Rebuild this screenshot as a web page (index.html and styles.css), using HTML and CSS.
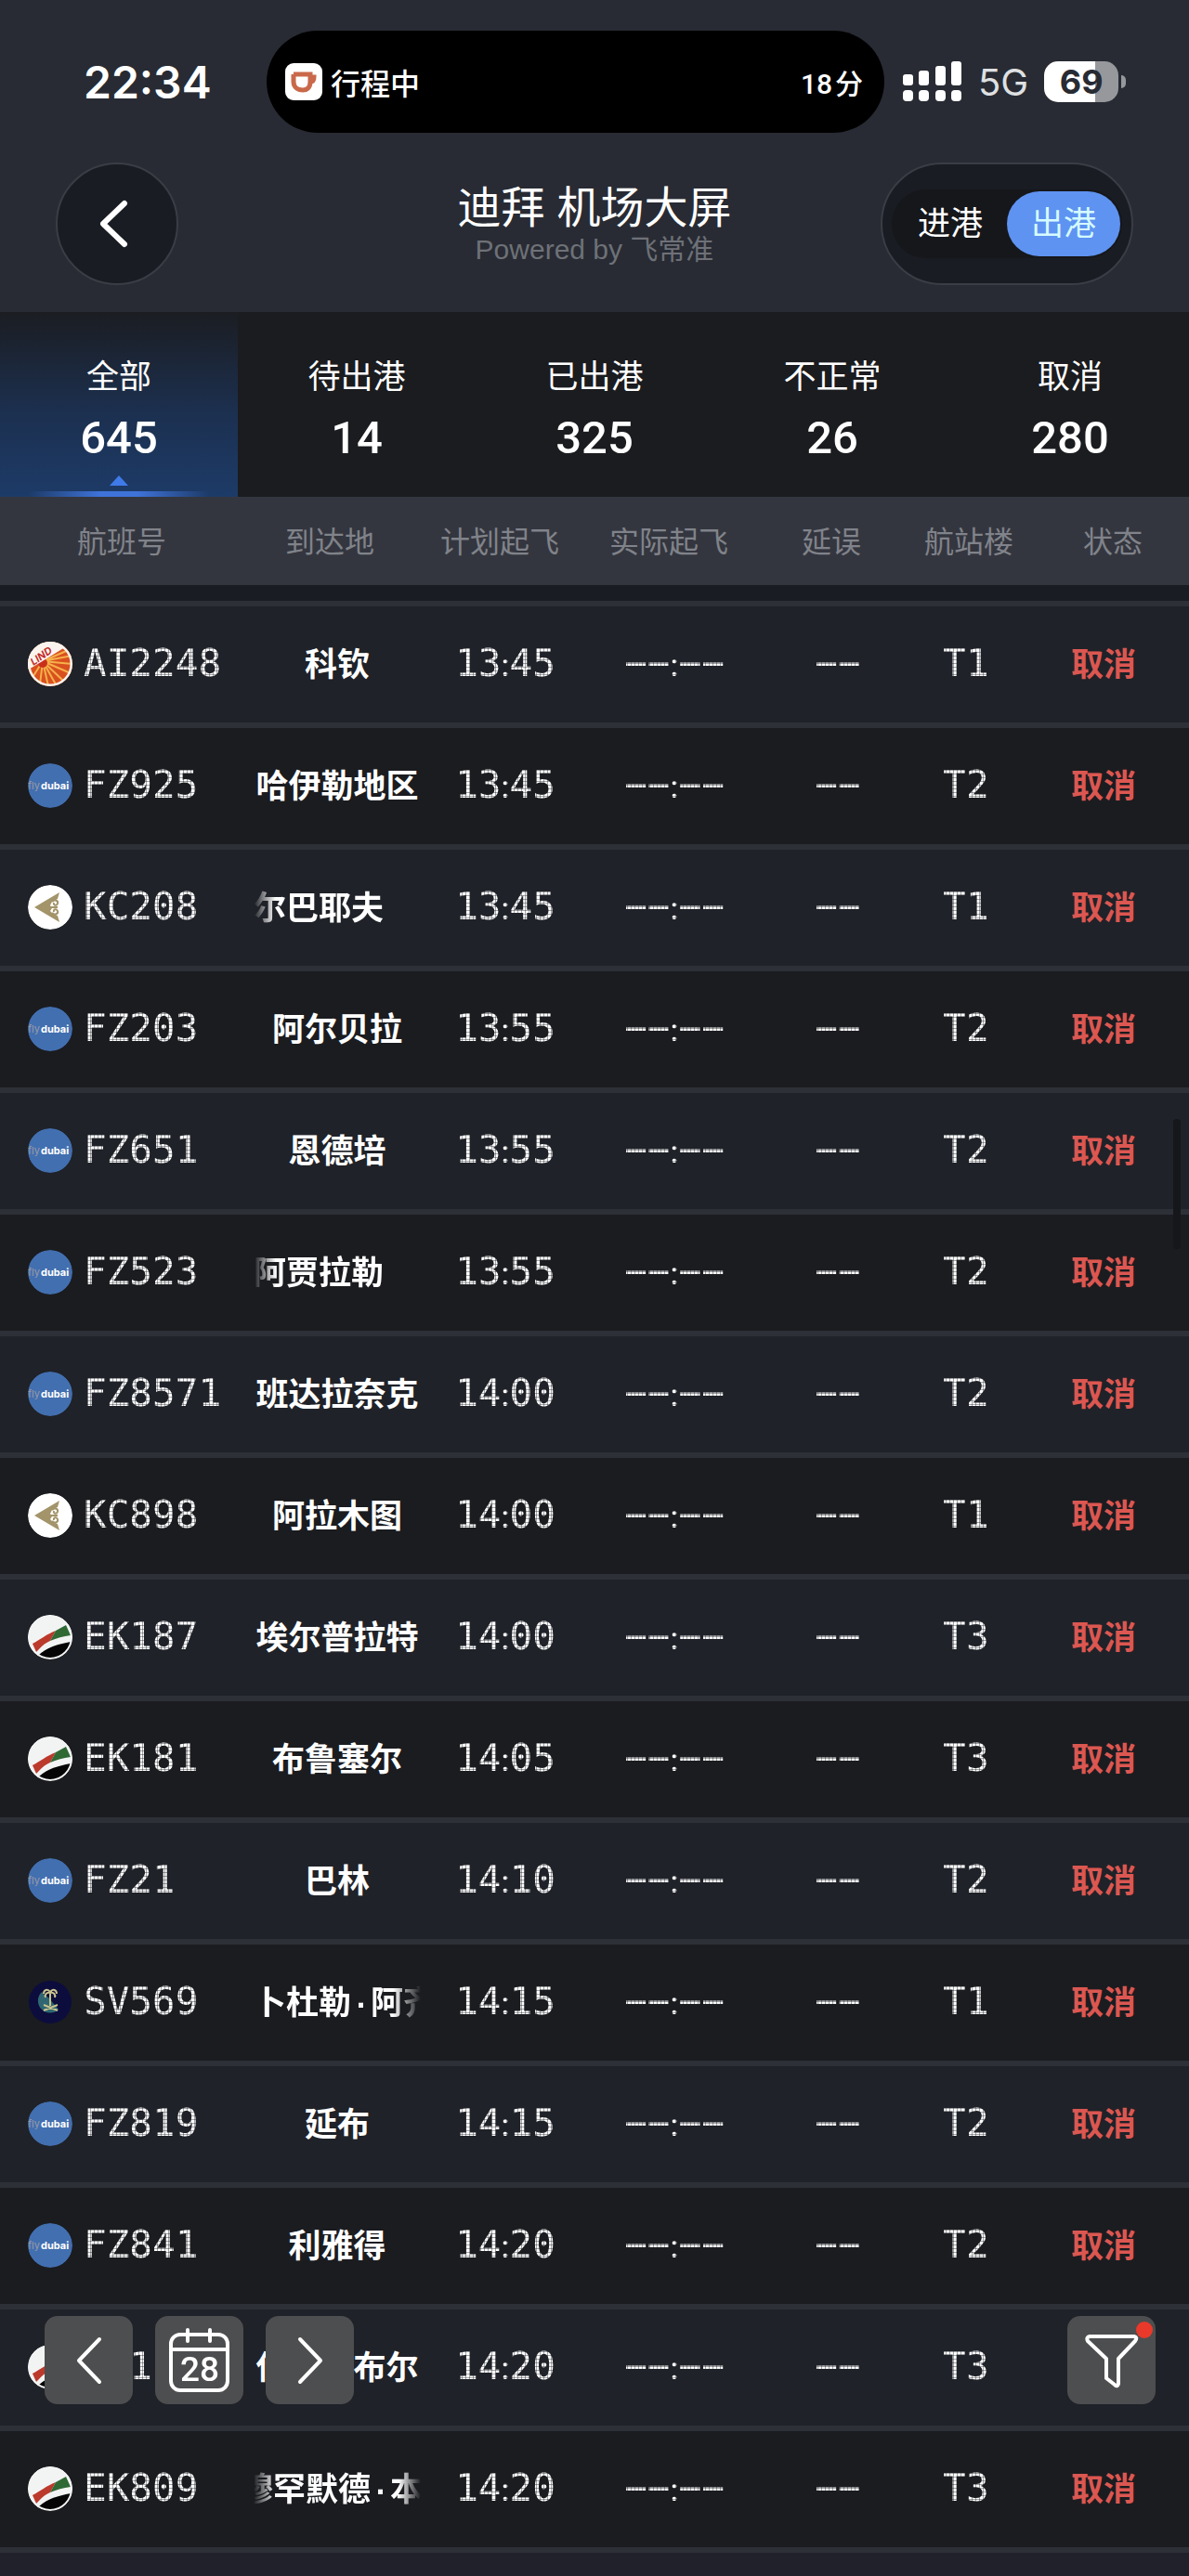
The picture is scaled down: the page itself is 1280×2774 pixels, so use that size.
FILE: index.html
```
<!DOCTYPE html>
<html lang="zh-CN">
<head>
    <meta charset="utf-8">
    <meta name="viewport" content="width=device-width, initial-scale=1">
    <title>迪拜 机场大屏</title>
    <link rel="stylesheet" href="styles.css">
</head>
<body>
    <svg class="sprite" aria-hidden="true">
        <symbol id="ai" viewBox="0 0 48 48">
            <path d="M0 0h48v48H0z" fill="#d9501f"/>
            <path d="M16 21 46 8M16 21 48 15M16 21 48 24M16 21 46 34M16 21 38 42M16 21 30 46M16 21 22 48M16 21 13 46M16 21 4 40" stroke="#f6b04a" stroke-width="2"/>
            <circle cx="16" cy="23" r="5" fill="#c9301c"/>
            <path d="M0 30 0 0H44L40 6 14 22 4 28z" fill="#fbf4ee"/>
            <text x="6" y="26" font-size="11" font-weight="700" font-style="italic" fill="#c02a28" transform="rotate(-35 6 26)">LIND</text>
            <circle cx="24" cy="24" r="23" fill="none" stroke="#fbf4ee" stroke-width="3"/>
        </symbol>
        <symbol id="fz" viewBox="0 0 48 48">
            <circle cx="24" cy="24" r="24" fill="#426fb0"/>
            <text x="0" y="28" font-size="11" fill="#9a9ba6">fly</text>
            <text x="14" y="28" font-size="11" font-weight="700" fill="#fff">dubai</text>
        </symbol>
        <symbol id="kc" viewBox="0 0 48 48">
            <circle cx="24" cy="24" r="24" fill="#fff"/>
            <path d="M7 24 34 8 32 15 26 18 24 22 26 25 24 28 27 31 32 33 34 40z" fill="#a3946a"/>
            <path d="M26 18c3-3 7-1 6 2s-5 2-4-1M26 30c3 3 7 1 6-2s-5-2-4 1M20 24h12" fill="none" stroke="#a3946a" stroke-width="2"/>
        </symbol>
        <symbol id="ek" viewBox="0 0 48 48">
            <circle cx="24" cy="24" r="24" fill="#f2f3f3"/>
            <path d="M5 31C14 26 20 21 30 17L24 28C17 31 14 35 9 40z" fill="#bb3a2c"/>
            <path d="M30 17 41 11 46 22C38 23 31 25 24 28z" fill="#2f6a35"/>
            <path d="M12 43C22 34 32 32 46 29V48H12z" fill="#050505"/>
            <circle cx="24" cy="24" r="23" fill="none" stroke="#f2f3f3" stroke-width="2"/>
        </symbol>
        <symbol id="sv" viewBox="0 0 48 48">
            <circle cx="24" cy="24" r="23" fill="#0c0d3d"/>
            <path d="M15 13a13 13 0 1 0 18 19c-4-5-7-8-9-11s-6-4-9-8z" fill="#2f6672"/>
            <path d="M24 12v16M24 13c-3-4-7-2-7 2M24 13c3-4 7-2 7 2M24 14c-4-1-6 2-5 5M24 14c4-1 6 2 5 5M17 33l15-6M32 33 17 27" fill="none" stroke="#c9c38c" stroke-width="2"/>
        </symbol>
    </svg>

    <div class="top">
        <div class="statusbar">
            <span class="clock">22:34</span>
            <div class="island">
                <svg class="island-icon" viewBox="0 0 40 40">
                    <rect width="40" height="40" rx="9" fill="#fff"/>
                    <path d="M9 12h18v8c0 7-4 9-8 9s-10-2-10-9V12M27 15h4c0 3-1 5-4 5" fill="none" stroke="#c9694a" stroke-width="5"/>
                </svg>
                <span>行程中</span>
                <span class="eta"><b>18</b>分</span>
            </div>
            <div class="indicators">
                <svg width="64" height="44" viewBox="0 0 64 44" fill="#fff">
                    <rect x="0" y="14" width="11" height="12" rx="3"/>
                    <rect x="17" y="10" width="11" height="16" rx="3"/>
                    <rect x="35" y="5" width="11" height="21" rx="3"/>
                    <rect x="52" y="0" width="11" height="26" rx="3"/>
                    <rect x="0" y="31" width="11" height="12" rx="4"/>
                    <rect x="17" y="31" width="11" height="12" rx="4"/>
                    <rect x="35" y="31" width="11" height="12" rx="4"/>
                    <rect x="52" y="31" width="11" height="12" rx="4"/>
                </svg>
                <span class="network">5G</span>
                <span class="battery">69</span>
            </div>
        </div>

        <header class="header">
            <button class="back" aria-label="返回">
                <svg width="32" height="52" viewBox="0 0 32 52"><path d="M28 4 5 26l23 22" fill="none" stroke="#fff" stroke-width="6" stroke-linecap="round" stroke-linejoin="round"/></svg>
            </button>
            <div class="heading">
                <h1>迪拜 机场大屏</h1>
                <p>Powered by 飞常准</p>
            </div>
            <div class="switch">
                <div class="track">
                    <button>进港</button>
                    <button class="on">出港</button>
                </div>
            </div>
        </header>
    </div>

    <nav class="tabs">
        <button class="tab active"><span>全部</span><strong>645</strong></button>
        <button class="tab"><span>待出港</span><strong>14</strong></button>
        <button class="tab"><span>已出港</span><strong>325</strong></button>
        <button class="tab"><span>不正常</span><strong>26</strong></button>
        <button class="tab"><span>取消</span><strong>280</strong></button>
    </nav>

    <table class="board">
        <thead>
            <tr><th>航班号</th><th>到达地</th><th>计划起飞</th><th>实际起飞</th><th>延误</th><th>航站楼</th><th>状态</th></tr>
        </thead>
        <tbody id="flights"></tbody>
    </table>

    <div class="floating">
        <button aria-label="前一天">
            <svg width="28" height="52" viewBox="0 0 28 52"><path d="M25 3 3 26l22 23"/></svg>
        </button>
        <button aria-label="选择日期">
            <svg width="66" height="70" viewBox="0 0 66 70">
                <rect x="2" y="7" width="61" height="60" rx="10"/>
                <path d="M2 23h61M20 2v12M44 2v12"/>
                <text x="33" y="57">28</text>
            </svg>
        </button>
        <button aria-label="后一天">
            <svg width="28" height="52" viewBox="0 0 28 52"><path d="M3 3l22 23L3 49"/></svg>
        </button>
        <button class="filter" aria-label="筛选">
            <svg width="58" height="60" viewBox="0 0 58 60"><path d="M5 4h48q4 1 1 5L36 28v27q-1 4-4 1l-9-7V28L3 9Q1 5 5 4z"/></svg>
        </button>
    </div>
    <div class="scroll-thumb"></div>

    <script src="board.js"></script>
</body>
</html>
```
FILE: styles.css
```
* {
    box-sizing: border-box;
}
body {
    margin: 0;
    min-height: 100vh;
    background-color: #20212a;
    color: #fff;
    font-family: "Liberation Sans", "Noto Sans CJK SC", sans-serif;
}
button {
    border: 0;
    padding: 0;
    background: none;
    color: inherit;
    font: inherit;
    cursor: pointer;
}
svg {
    display: block;
}
.sprite {
    display: none;
}

/* status bar + title */
.top {
    background-color: #282b33;
    height: 336px;
}
.statusbar {
    display: grid;
    grid-template-columns: 287px 1fr 328px;
    padding-top: 33px;
    height: 143px;
    align-items: center;
}
.clock {
    padding-left: 90px;
    font: 600 48px Inter, sans-serif;
}
.island {
    display: flex;
    align-items: center;
    gap: 9px;
    height: 110px;
    padding: 0 23px 0 20px;
    border-radius: 55px;
    background-color: #000;
    font-size: 32px;
    font-weight: 500;
}
.island-icon {
    width: 40px;
    height: 40px;
}
.eta {
    margin-left: auto;
    font-size: 30px;
}
.eta b {
    font-family: Roboto, sans-serif;
    font-weight: 500;
    margin-right: 3px;
}
.indicators {
    display: flex;
    align-items: center;
    padding-left: 20px;
}
.network {
    margin: 0 17px;
    color: #dfe0e2;
    font: 400 40px Inter, sans-serif;
}
.battery {
    position: relative;
    width: 80px;
    height: 44px;
    border-radius: 15px;
    background: linear-gradient(to right, #fff 69%, #96989c 69%);
    color: #282b33;
    font: 700 36px/44px Inter, sans-serif;
    text-align: center;
}
.battery::after {
    content: "";
    position: absolute;
    right: -8px;
    top: 15px;
    width: 5px;
    height: 14px;
    border-radius: 0 5px 5px 0;
    background-color: #96989c;
}
.header {
    display: grid;
    grid-template-columns: 272px 1fr 272px;
    align-items: center;
    padding: 32px 60px 0;
}
.back {
    display: flex;
    align-items: center;
    justify-content: center;
    width: 132px;
    height: 132px;
    padding-right: 8px;
    border: 2px solid #3a3d45;
    border-radius: 50%;
    background-color: #191c23;
}
.heading {
    text-align: center;
}
.heading h1 {
    margin: 0;
    font-size: 47px;
    font-weight: 400;
    line-height: 56px;
}
.heading p {
    margin: 0;
    color: #6e7178;
    font-size: 30px;
    line-height: 34px;
}
.switch {
    display: flex;
    align-items: center;
    height: 132px;
    padding: 0 10px;
    border: 2px solid #3a3d45;
    border-radius: 66px;
    background: #1a1c23;
}
.track {
    display: flex;
    flex: 1;
    padding: 2px;
    border-radius: 37px;
    background-color: #15171b;
}
.track button {
    flex: 1;
    height: 70px;
    border-radius: 35px;
    font-size: 35px;
    line-height: 70px;
}
.track .on {
    background-color: #5e93f1;
    color: #d5fbff;
}

/* counters */
.tabs {
    display: grid;
    grid-template-columns: repeat(5, 1fr);
    background-color: #1b1c1f;
}
.tab {
    position: relative;
    display: flex;
    flex-direction: column;
    align-items: center;
    height: 199px;
    padding-top: 45px;
}
.tab span {
    font-size: 35px;
    line-height: 50px;
}
.tab strong {
    margin-top: 12px;
    font: 500 49px/58px Roboto, sans-serif;
}
.tab.active {
    background: linear-gradient(#1b1d22, #1c3050 55%, #1d3b68);
}
.tab.active::before {
    content: "";
    position: absolute;
    bottom: 12px;
    border: 10px solid transparent;
    border-top: 0;
    border-bottom: 11px solid #3f7ae8;
}
.tab.active::after {
    content: "";
    position: absolute;
    bottom: 0;
    left: 12%;
    right: 12%;
    height: 6px;
    background: linear-gradient(to right, transparent, #3f73da 40%, #3f73da 60%, transparent);
}

/* departures board */
.board,
.board thead,
.board tbody {
    display: block;
}
.board tr {
    display: grid;
    align-items: center;
}
.board th,
.board td {
    padding: 0;
    text-align: center;
}
.board thead tr {
    grid-template-columns: 254fr 202fr 164fr 200fr 150fr 146fr 164fr;
    height: 95px;
    padding-bottom: 4px;
    background-color: #34363f;
}
.board th {
    color: #80838a;
    font-size: 32px;
    font-weight: 400;
}
.board th:first-child {
    padding-left: 8px;
}
.board tbody {
    padding-top: 17px;
    border-bottom: 6px solid #2e3038;
    background-color: #191c22;
}
.board tbody tr {
    grid-template-columns: 262fr 202fr 160fr 204fr 148fr 128fr 168fr;
    height: 131px;
    padding: 0 8px 2px 0;
    border-top: 6px solid #2e3038;
    background-color: #1b1c20;
}
.board tbody tr:nth-child(odd) {
    background-color: #1f2228;
}
.board .flight {
    display: flex;
    align-items: center;
    gap: 12px;
    padding-left: 30px;
}
.logo {
    flex: none;
    width: 48px;
    height: 48px;
    border-radius: 50%;
    overflow: hidden;
    font-family: Inter, sans-serif;
}
/* lamp grid over the mono digits */
.led {
    display: inline-block;
    padding-bottom: 2px;
    font: 400 41px/46px "DejaVu Sans Mono", monospace;
    -webkit-mask-image: linear-gradient(to right, #000 3px, rgba(0, 0, 0, 0.6) 3px), linear-gradient(#000 3px, rgba(0, 0, 0, 0.6) 3px);
    -webkit-mask-size: 4px 4px;
    -webkit-mask-composite: source-in;
    mask-composite: intersect;
}
.led i {
    font: 500 34px Roboto, sans-serif;
}
.board .city,
.board .state {
    padding-top: 8px;
    font-family: "Liberation Mono", "Noto Sans CJK SC", sans-serif;
    font-size: 35px;
    font-weight: 700;
    line-height: 50px;
    white-space: nowrap;
}
.city div {
    width: 180px;
    margin: 0 auto;
    overflow: hidden;
}
.city .cut-left,
.city .cut-right,
.city .cut-both {
    text-align: left;
}
.city .cut-left {
    -webkit-mask-image: linear-gradient(to right, transparent, #000 24px);
}
.city .cut-right {
    -webkit-mask-image: linear-gradient(to left, transparent, #000 30px);
}
.city .cut-both {
    text-indent: -14px;
    -webkit-mask-image: linear-gradient(to right, transparent, #000 24px, #000 156px, transparent);
}
.state {
    color: #dc5751;
}

/* date and filter buttons */
.floating {
    position: fixed;
    left: 48px;
    right: 36px;
    bottom: 185px;
    display: flex;
    gap: 24px;
}
.floating button {
    position: relative;
    display: flex;
    align-items: center;
    justify-content: center;
    width: 95px;
    height: 95px;
    border-radius: 14px;
    background-color: #4d4e4f;
}
.floating svg {
    fill: none;
    stroke: #fff;
    stroke-width: 4;
    stroke-linecap: round;
    stroke-linejoin: round;
}
.floating text {
    fill: #fff;
    stroke: none;
    font: 500 37px Roboto, sans-serif;
    text-anchor: middle;
}
.floating .filter {
    margin-left: auto;
}
.filter::after {
    content: "";
    position: absolute;
    top: 6px;
    right: 3px;
    width: 18px;
    height: 18px;
    border-radius: 50%;
    background-color: #e9392a;
}
.scroll-thumb {
    position: fixed;
    top: 1205px;
    right: 9px;
    width: 8px;
    height: 140px;
    border-radius: 4px;
    background-color: #15171a;
}
```
FILE: board.js
```
// flight, city, planned time, terminal, clipping of a scrolling city name
const flights = [
    ['AI2248', '科钦', '13:45', 'T1'],
    ['FZ925', '哈伊勒地区', '13:45', 'T2'],
    ['KC208', '尔巴耶夫', '13:45', 'T1', 'cut-left'],
    ['FZ203', '阿尔贝拉', '13:55', 'T2'],
    ['FZ651', '恩德培', '13:55', 'T2'],
    ['FZ523', '阿贾拉勒', '13:55', 'T2', 'cut-left'],
    ['FZ8571', '班达拉奈克', '14:00', 'T2'],
    ['KC898', '阿拉木图', '14:00', 'T1'],
    ['EK187', '埃尔普拉特', '14:00', 'T3'],
    ['EK181', '布鲁塞尔', '14:05', 'T3'],
    ['FZ21', '巴林', '14:10', 'T2'],
    ['SV569', '卜杜勒·阿齐', '14:15', 'T1', 'cut-right'],
    ['FZ819', '延布', '14:15', 'T2'],
    ['FZ841', '利雅得', '14:20', 'T2'],
    ['EK121', '伊斯坦布尔', '14:20', 'T3'],
    ['EK809', '穆罕默德·本', '14:20', 'T3', 'cut-both']
];

const led = text => `<span class="led">${text.replace(':', '<i>:</i>')}</span>`;

document.getElementById('flights').innerHTML = flights.map(([no, city, time, terminal, cut]) => `
    <tr>
        <td class="flight"><svg class="logo"><use href="#${no.slice(0, 2).toLowerCase()}"/></svg>${led(no)}</td>
        <td class="city"><div class="${cut || ''}">${city}</div></td>
        <td>${led(time)}</td>
        <td>${led('−−:−−')}</td>
        <td>${led('−−')}</td>
        <td>${led(terminal)}</td>
        <td class="state">取消</td>
    </tr>`).join('');
```
